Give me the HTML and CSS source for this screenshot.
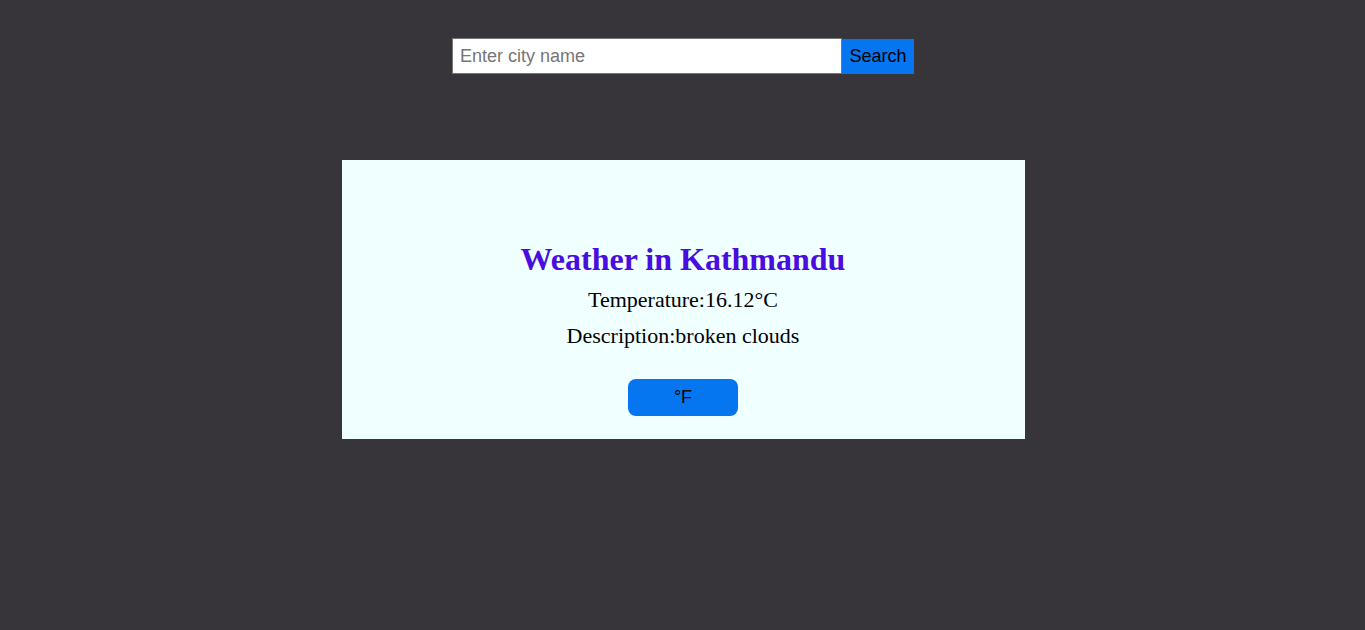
FILE: index.html
```html
<!DOCTYPE html>
<html lang="en">
<head>
<meta charset="utf-8">
<title>Weather</title>
<link rel="stylesheet" href="styles.css">
</head>
<body>
<div class="search">
  <input class="city" type="text" placeholder="Enter city name">
  <button class="search-btn">Search</button>
</div>
<div class="card">
  <h1 class="title">Weather in Kathmandu</h1>
  <p class="line temp">Temperature:16.12°C</p>
  <p class="line desc">Description:broken clouds</p>
  <button class="unit">°F</button>
</div>
</body>
</html>
```
FILE: styles.css
```css
html, body {
  margin: 0;
  padding: 0;
}
body {
  background: #37353a;
  font-family: "Liberation Serif", "Times New Roman", serif;
  min-height: 630px;
}
.search {
  display: flex;
  justify-content: center;
  align-items: center;
  padding-top: 38px;
  padding-left: 1px;
}
.city {
  box-sizing: border-box;
  width: 390px;
  height: 36px;
  margin: 0;
  border: 1px solid #767676;
  padding: 0 7px;
  font-family: "Liberation Sans", Arial, sans-serif;
  font-size: 18px;
  color: #000;
  background: #fff;
  outline: none;
}
.city::placeholder {
  color: #757575;
}
.search-btn {
  box-sizing: border-box;
  width: 72px;
  height: 35px;
  margin: 0;
  border: none;
  padding: 0;
  background: #0575f0;
  color: #000;
  font-family: "Liberation Sans", Arial, sans-serif;
  font-size: 18px;
}
.card {
  box-sizing: border-box;
  width: 683px;
  height: 279px;
  margin: 86px 0 0 calc(50% - 340.5px);
  background: #f0ffff;
  display: flex;
  flex-direction: column;
  align-items: center;
  padding-top: 81px;
  padding-right: 1px;
}
.title {
  margin: 0;
  font-size: 32px;
  font-weight: bold;
  color: #4a0de0;
  line-height: 37px;
}
.line {
  margin: 0;
  font-size: 22px;
  line-height: 25px;
  color: #000;
}
.temp {
  margin-top: 9px;
}
.desc {
  margin-top: 11px;
}
.unit {
  margin-top: 31px;
  width: 110px;
  height: 37px;
  border: none;
  border-radius: 8px;
  background: #0575f0;
  color: #000;
  font-family: "Liberation Sans", Arial, sans-serif;
  font-size: 18px;
  padding: 0;
}
```
